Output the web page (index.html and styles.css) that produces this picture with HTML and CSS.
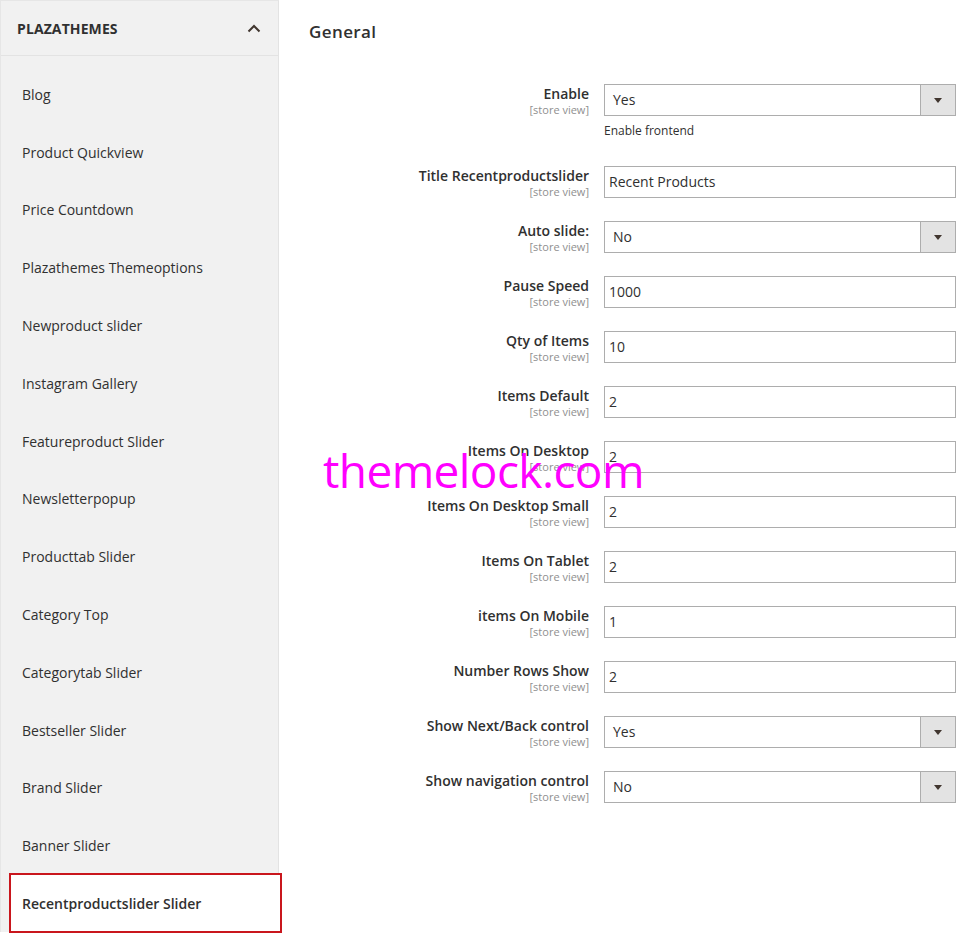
FILE: index.html
```html
<!DOCTYPE html>
<html lang="en">
<head>
<meta charset="utf-8">
<title>Recentproductslider Slider</title>
<link rel="stylesheet" href="styles.css">
</head>
<body>
<div class="page">
  <aside class="sidebar">
    <div class="nav-head">
      <span class="nav-title">PLAZATHEMES</span>
      <svg class="chev" width="14" height="9" viewBox="0 0 14 9"><path d="M1.5 7.5 L7 2 L12.5 7.5" fill="none" stroke="#41362f" stroke-width="2"/></svg>
    </div>
    <ul class="nav-list">
      <li class="nav-item">Blog</li>
      <li class="nav-item">Product Quickview</li>
      <li class="nav-item">Price Countdown</li>
      <li class="nav-item">Plazathemes Themeoptions</li>
      <li class="nav-item">Newproduct slider</li>
      <li class="nav-item">Instagram Gallery</li>
      <li class="nav-item">Featureproduct Slider</li>
      <li class="nav-item">Newsletterpopup</li>
      <li class="nav-item">Producttab Slider</li>
      <li class="nav-item">Category Top</li>
      <li class="nav-item">Categorytab Slider</li>
      <li class="nav-item">Bestseller Slider</li>
      <li class="nav-item">Brand Slider</li>
      <li class="nav-item">Banner Slider</li>
      <li class="nav-item active">Recentproductslider Slider</li>
    </ul>
  </aside>
  <main class="content">
    <h2 class="section-title">General</h2>
    <div class="form">
      <div class="row">
        <div class="label"><span class="lbl">Enable</span><span class="scope">[store view]</span></div>
        <div class="control">
          <div class="select"><span class="val">Yes</span><span class="arrow"></span></div>
          <div class="note">Enable frontend</div>
        </div>
      </div>
      <div class="row">
        <div class="label"><span class="lbl">Title Recentproductslider</span><span class="scope">[store view]</span></div>
        <div class="control"><div class="input">Recent Products</div></div>
      </div>
      <div class="row">
        <div class="label"><span class="lbl">Auto slide:</span><span class="scope">[store view]</span></div>
        <div class="control"><div class="select"><span class="val">No</span><span class="arrow"></span></div></div>
      </div>
      <div class="row">
        <div class="label"><span class="lbl">Pause Speed</span><span class="scope">[store view]</span></div>
        <div class="control"><div class="input">1000</div></div>
      </div>
      <div class="row">
        <div class="label"><span class="lbl">Qty of Items</span><span class="scope">[store view]</span></div>
        <div class="control"><div class="input">10</div></div>
      </div>
      <div class="row">
        <div class="label"><span class="lbl">Items Default</span><span class="scope">[store view]</span></div>
        <div class="control"><div class="input">2</div></div>
      </div>
      <div class="row">
        <div class="label"><span class="lbl">Items On Desktop</span><span class="scope">[store view]</span></div>
        <div class="control"><div class="input">2</div></div>
      </div>
      <div class="row">
        <div class="label"><span class="lbl">Items On Desktop Small</span><span class="scope">[store view]</span></div>
        <div class="control"><div class="input">2</div></div>
      </div>
      <div class="row">
        <div class="label"><span class="lbl">Items On Tablet</span><span class="scope">[store view]</span></div>
        <div class="control"><div class="input">2</div></div>
      </div>
      <div class="row">
        <div class="label"><span class="lbl">items On Mobile</span><span class="scope">[store view]</span></div>
        <div class="control"><div class="input">1</div></div>
      </div>
      <div class="row">
        <div class="label"><span class="lbl">Number Rows Show</span><span class="scope">[store view]</span></div>
        <div class="control"><div class="input">2</div></div>
      </div>
      <div class="row">
        <div class="label"><span class="lbl">Show Next/Back control</span><span class="scope">[store view]</span></div>
        <div class="control"><div class="select"><span class="val">Yes</span><span class="arrow"></span></div></div>
      </div>
      <div class="row">
        <div class="label"><span class="lbl">Show navigation control</span><span class="scope">[store view]</span></div>
        <div class="control"><div class="select"><span class="val">No</span><span class="arrow"></span></div></div>
      </div>
    </div>
  </main>
  <div class="watermark">themelock.com</div>
</div>
</body>
</html>
```

FILE: styles.css
```css
* { box-sizing: border-box; }
html, body { margin: 0; padding: 0; background: #fff; }
body {
  font-family: "Open Sans", "Liberation Sans", sans-serif;
  color: #303030;
  width: 972px;
  height: 945px;
  overflow: hidden;
}
.page {
  position: relative;
  display: flex;
  align-items: flex-start;
}
.sidebar {
  width: 279px;
  flex: 0 0 279px;
  background: #f1f1f1;
  border-left: 1px solid #e6e6e6;
  border-right: 1px solid #e3e3e3;
  border-top: 1px solid #e6e6e6;
}
.nav-head {
  height: 55px;
  display: flex;
  align-items: center;
  justify-content: space-between;
  padding: 0 17px 0 16px;
  border-bottom: 1px solid #e3e3e3;
}
.nav-title {
  font-size: 14px;
  font-weight: 700;
  color: #303030;
  letter-spacing: 0.1px;
}
.chev { margin-top: 1px; }
.nav-list {
  list-style: none;
  margin: 0;
  padding: 9px 0 0 0;
}
.nav-item {
  height: 57.8px;
  display: flex;
  align-items: center;
  padding-left: 21px;
  padding-top: 1px;
  font-size: 14px;
  color: #303030;
}
.nav-item.active {
  height: 60px;
  margin: -1px -4px -1px 8px;
  padding-left: 11px;
  padding-top: 0;
  background: #fff;
  border: 2px solid #c9161d;
  font-weight: 600;
  position: relative;
}
.content {
  flex: 1;
  padding: 0 16px 0 30px;
}
.section-title {
  margin: 0;
  padding-top: 20px;
  height: 84px;
  font-size: 17px;
  line-height: 24px;
  font-weight: 600;
  letter-spacing: 0.4px;
  color: #303030;
}
.row {
  display: flex;
  gap: 15px;
  margin-bottom: 23px;
}
.label {
  width: 280px;
  flex: 0 0 280px;
  display: flex;
  flex-direction: column;
  align-items: flex-end;
  text-align: right;
}
.lbl {
  font-size: 14px;
  font-weight: 600;
  line-height: 20px;
  color: #303030;
}
.scope {
  font-size: 11px;
  line-height: 11px;
  color: #8f8f8f;
}
.control { flex: 1; }
.input, .select {
  height: 32px;
  border: 1px solid #adadad;
  background: #fff;
  font-size: 14px;
  color: #303030;
  display: flex;
  align-items: center;
}
.input { padding-left: 4px; padding-bottom: 1px; }
.select .val { flex: 1; padding-left: 8px; padding-bottom: 1px; }
.arrow {
  width: 35px;
  height: 30px;
  background: #e3e3e3;
  border-left: 1px solid #adadad;
  position: relative;
}
.arrow::after {
  content: "";
  position: absolute;
  left: 13px;
  top: 13px;
  border-left: 4px solid transparent;
  border-right: 4px solid transparent;
  border-top: 5px solid #41362f;
}
.note {
  font-size: 12px;
  line-height: 20px;
  padding-top: 5px;
  height: 27px;
  color: #303030;
}
.watermark {
  position: absolute;
  left: 323px;
  top: 440px;
  font-family: "Open Sans", "Liberation Sans", sans-serif;
  font-size: 46px;
  line-height: 60px;
  letter-spacing: -0.6px;
  color: #ff00ff;
  pointer-events: none;
}
```
